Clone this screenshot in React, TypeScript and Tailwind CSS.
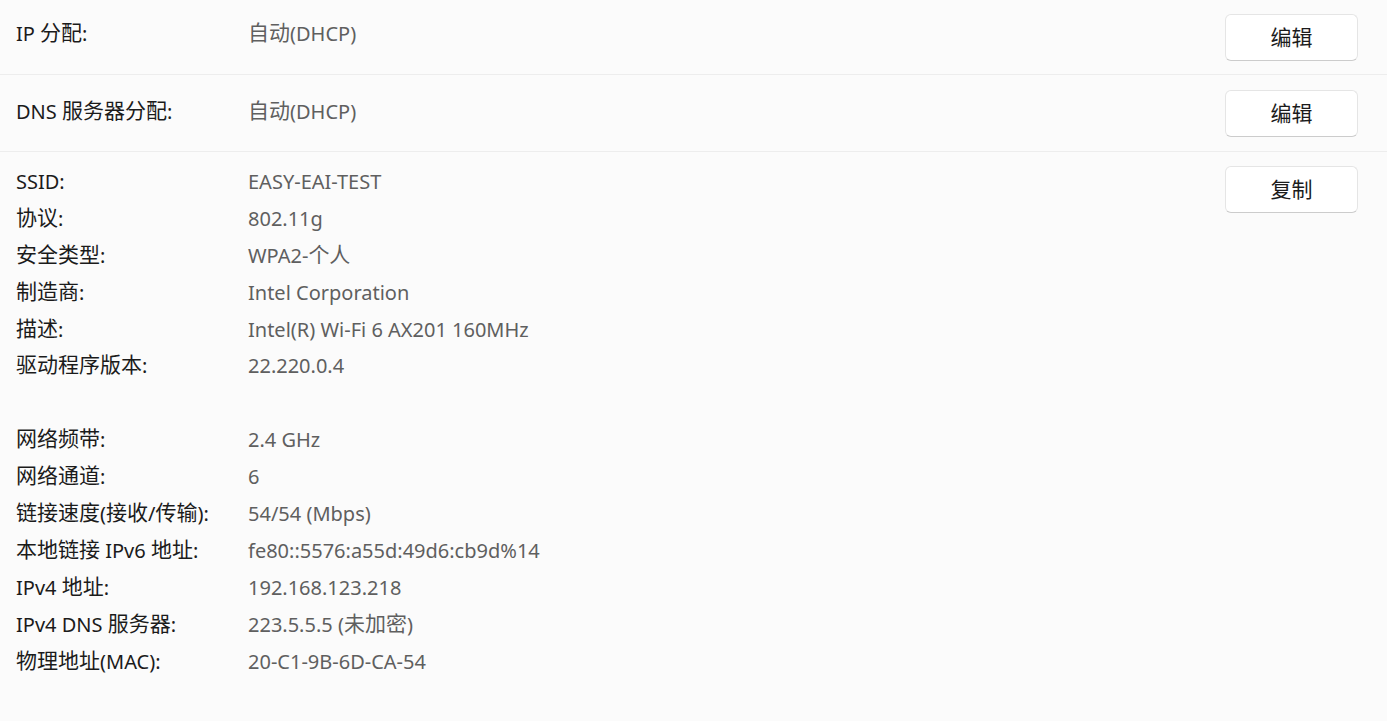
import React from "react";

const font = "font-['Segoe_UI','Noto_Sans','Noto_Sans_CJK_SC',sans-serif]";

// CJK runs render a touch larger than Latin, like YaHei next to Segoe UI
const Mixed = ({ text }: { text: string }) => (
  <>
    {text.split(/([\u4e00-\u9fff]+)/).map((part, i) =>
      /[\u4e00-\u9fff]/.test(part) ? (
        <span key={i} className="text-[21px] leading-none align-[1px] font-['Noto_Sans_CJK_SC',sans-serif]">
          {part}
        </span>
      ) : (
        <span key={i}>{part}</span>
      )
    )}
  </>
);

const Btn = ({ label }: { label: string }) => (
  <button className="w-[133px] h-[47px] rounded-[6px] bg-white border border-[#e5e5e5] border-b-[#cccccc] text-[21px] text-[#1b1b1b] pb-[1px] shrink-0 font-['Noto_Sans_CJK_SC',sans-serif]">
    {label}
  </button>
);

const info: [string, string][] = [
  ["SSID:", "EASY-EAI-TEST"],
  ["协议:", "802.11g"],
  ["安全类型:", "WPA2-个人"],
  ["制造商:", "Intel Corporation"],
  ["描述:", "Intel(R) Wi-Fi 6 AX201 160MHz"],
  ["驱动程序版本:", "22.220.0.4"],
  ["", ""],
  ["网络频带:", "2.4 GHz"],
  ["网络通道:", "6"],
  ["链接速度(接收/传输):", "54/54 (Mbps)"],
  ["本地链接 IPv6 地址:", "fe80::5576:a55d:49d6:cb9d%14"],
  ["IPv4 地址:", "192.168.123.218"],
  ["IPv4 DNS 服务器:", "223.5.5.5 (未加密)"],
  ["物理地址(MAC):", "20-C1-9B-6D-CA-54"],
];

export default function App() {
  return (
    <div className={`${font} w-[1387px] h-[721px] bg-[#fbfbfb] text-[20px] overflow-hidden`}>
      <div className="flex items-center h-[75px] border-b border-[#ededed] pl-4 pr-[29px]">
        <div className="flex flex-1 pb-[6px] leading-[30px]">
          <div className="w-[232px] text-[#1b1b1b]"><Mixed text="IP 分配:" /></div>
          <div className="text-[#5f5f5f]"><Mixed text="自动(DHCP)" /></div>
        </div>
        <Btn label="编辑" />
      </div>
      <div className="flex items-center h-[77px] border-b border-[#ededed] pl-4 pr-[29px]">
        <div className="flex flex-1 pb-[3px] leading-[30px]">
          <div className="w-[232px] text-[#1b1b1b]"><Mixed text="DNS 服务器分配:" /></div>
          <div className="text-[#5f5f5f]"><Mixed text="自动(DHCP)" /></div>
        </div>
        <Btn label="编辑" />
      </div>
      <div className="flex items-start pl-4 pr-[29px] pt-[12px]">
        <div className="flex-1 leading-[36.9px]">
          {info.map(([k, v], i) => (
            <div key={i} className="flex h-[36.9px]">
              <div className="w-[232px] text-[#1b1b1b]"><Mixed text={k} /></div>
              <div className="text-[#5f5f5f]"><Mixed text={v} /></div>
            </div>
          ))}
        </div>
        <div className="pt-[2px]">
          <Btn label="复制" />
        </div>
      </div>
    </div>
  );
}
